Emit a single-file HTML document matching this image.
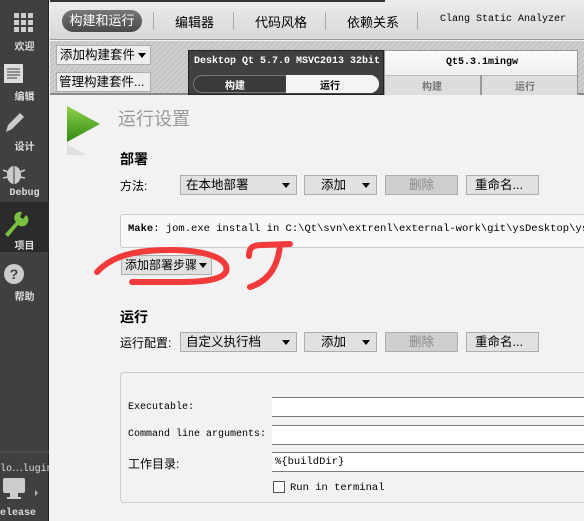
<!DOCTYPE html>
<html><head><meta charset="utf-8"><style>
*{margin:0;padding:0;box-sizing:border-box}
html,body{width:584px;height:521px;overflow:hidden}
body{background:#f2f2f2;font-family:"Liberation Sans","Noto Sans CJK SC",sans-serif;font-size:12px;color:#000;position:relative}
.a{position:absolute;white-space:nowrap}
.mono{font-family:"Liberation Mono","Noto Sans CJK SC",monospace}
.side{left:0;top:0;width:49px;height:521px;background:#404040;border-right:1px solid #222}
.sl{color:#ddd;font-size:10px;font-weight:bold;width:49px;text-align:center;left:0}
.btn{background:#e1e1e1;border:1px solid #adadad;height:20px;line-height:18px;padding-left:5px;font-size:12.5px}
.dis{background:#cfcfcf;color:#888;text-align:center;padding:0}
.arr{position:absolute;right:6px;top:7px;width:0;height:0;border-left:4px solid transparent;border-right:4px solid transparent;border-top:5px solid #000}
.inp{background:#fff;border-top:1px solid #7a7a7a;border-bottom:1px solid #7a7a7a;left:272px;width:312px;height:20px}
</style></head><body>
<div class="a side"></div>
<svg class="a" style="left:0;top:0" width="49" height="521">
<g fill="#ccc">
<rect x="14" y="13" width="5" height="5"/><rect x="21" y="13" width="5" height="5"/><rect x="28" y="13" width="5" height="5"/>
<rect x="14" y="20" width="5" height="5"/><rect x="21" y="20" width="5" height="5"/><rect x="28" y="20" width="5" height="5"/>
<rect x="14" y="27" width="5" height="5"/><rect x="21" y="27" width="5" height="5"/><rect x="28" y="27" width="5" height="5"/>
<rect x="4" y="64" width="19" height="19" fill="#ddd"/>
</g>
<g stroke="#444" stroke-width="1"><line x1="7" y1="69" x2="20" y2="69"/><line x1="7" y1="72" x2="20" y2="72"/><line x1="7" y1="75" x2="20" y2="75"/><line x1="7" y1="78" x2="17" y2="78"/></g>
<path d="M6 132 L8 125 L20 113 L24 117 L12 129 Z" fill="#ccc"/>
<ellipse cx="14" cy="175" rx="7" ry="9" fill="#ccc"/><line x1="14" y1="166" x2="14" y2="184" stroke="#404040"/>
<g stroke="#ccc" stroke-width="1.5"><line x1="3" y1="170" x2="8" y2="172"/><line x1="3" y1="178" x2="8" y2="177"/><line x1="25" y1="170" x2="20" y2="172"/><line x1="25" y1="178" x2="20" y2="177"/></g>
<rect x="0" y="202" width="49" height="50" fill="#2b2b2b"/>
<path d="M5 234 L16 222 A6 6 0 0 1 22 212 L20 217 L23 219 L26 215 A6 6 0 0 1 18 225 L8 237 Z" fill="#7ac143"/>
<circle cx="14" cy="274" r="10" fill="#ccc"/>
<text x="14" y="279" text-anchor="middle" font-size="14" font-weight="bold" fill="#404040" font-family="Liberation Sans">?</text>
<line x1="0" y1="452" x2="49" y2="452" stroke="#555"/>
<rect x="3" y="478" width="22" height="15" rx="2" fill="#ccc"/><rect x="10" y="493" width="8" height="4" fill="#ccc"/><rect x="7" y="497" width="14" height="2" fill="#ccc"/>
<path d="M35 490 L38 493 L35 496 Z" fill="#bbb"/>
</svg>
<div class="a sl" style="top:38px">欢迎</div>
<div class="a sl" style="top:88px">编辑</div>
<div class="a sl" style="top:138px">设计</div>
<div class="a sl mono" style="top:188px">Debug</div>
<div class="a sl" style="top:237px">项目</div>
<div class="a sl" style="top:288px">帮助</div>
<div class="a mono" style="left:0;top:459px;width:49px;overflow:hidden;color:#ddd;font-size:10px">lo⋯lugin</div>
<div class="a mono" style="left:0;top:508px;color:#ddd;font-size:10px;font-weight:bold">elease</div>
<div class="a" style="left:50px;top:0;width:534px;height:40px;background:linear-gradient(#ececec,#d8d8d8);border-bottom:1px solid #999"></div>
<div class="a" style="left:50px;top:0;width:335px;height:2px;background:#333"></div>
<div class="a" style="left:62px;top:10px;width:80px;height:22px;border-radius:11px;background:linear-gradient(#777,#4a4a4a);color:#fff;text-align:center;line-height:22px;font-size:13px">构建和运行</div>
<div class="a" style="left:153px;top:12px;width:1px;height:18px;background:#aaa"></div>
<div class="a" style="left:233px;top:12px;width:1px;height:18px;background:#aaa"></div>
<div class="a" style="left:325px;top:12px;width:1px;height:18px;background:#aaa"></div>
<div class="a" style="left:417px;top:12px;width:1px;height:18px;background:#aaa"></div>
<div class="a" style="left:175px;top:12px;font-size:13px">编辑器</div>
<div class="a" style="left:255px;top:12px;font-size:13px">代码风格</div>
<div class="a" style="left:347px;top:12px;font-size:13px">依赖关系</div>
<div class="a mono" style="left:440px;top:14px;font-size:10px">Clang Static Analyzer</div>
<div class="a" style="left:50px;top:41px;width:534px;height:54px;background:repeating-linear-gradient(135deg,#cfcfcf 0 2px,#c4c4c4 2px 4px);border-bottom:2px solid #888"></div>
<div class="a btn" style="left:56px;top:45px;width:95px;background:#eee;padding-left:3px">添加构建套件<span class="arr" style="right:4px"></span></div>
<div class="a btn" style="left:56px;top:72px;width:95px;background:#eee;padding-left:2px;overflow:hidden">管理构建套件...</div>
<div class="a" style="left:188px;top:50px;width:196px;height:45px;background:#404040;border:1px solid #222"></div>
<div class="a mono" style="left:194px;top:56px;color:#fff;font-size:10px;font-weight:bold">Desktop Qt 5.7.0 MSVC2013 32bit</div>
<div class="a" style="left:193px;top:75px;width:186px;height:18px;border:1px solid #777;border-radius:9px;background:#3a3a3a"></div>
<div class="a" style="left:286px;top:75px;width:93px;height:18px;border-radius:0 9px 9px 0;background:#f4f4f4"></div>
<div class="a" style="left:225px;top:77px;color:#fff;font-size:10px;font-weight:bold">构建</div>
<div class="a" style="left:320px;top:77px;font-size:10px;font-weight:bold">运行</div>
<div class="a" style="left:384px;top:50px;width:194px;height:45px;background:linear-gradient(#fafafa,#e8e8e8);border:1px solid #999"></div>
<div class="a mono" style="left:446px;top:57px;font-size:10px;font-weight:bold">Qt5.3.1mingw</div>
<div class="a" style="left:385px;top:75px;width:192px;height:20px;background:#ddd;border-top:1px solid #bbb"></div>
<div class="a" style="left:480px;top:75px;width:2px;height:20px;background:#999"></div>
<div class="a" style="left:422px;top:78px;color:#777;font-size:10px;font-weight:bold">构建</div>
<div class="a" style="left:515px;top:78px;color:#777;font-size:10px;font-weight:bold">运行</div>
<svg class="a" style="left:66px;top:105px" width="36" height="50"><defs><linearGradient id="g" x1="0" y1="0" x2="0" y2="1"><stop offset="0" stop-color="#8fd14a"/><stop offset="1" stop-color="#2f8a14"/></linearGradient></defs><path d="M1 1 L34 19 L1 37 Z" fill="url(#g)"/><path d="M1 39 L20 50 L1 50Z" fill="#e0e0e0"/></svg>
<div class="a" style="left:118px;top:105px;font-size:18px;color:#999">运行设置</div>
<div class="a" style="left:120px;top:149px;font-size:14px;font-weight:bold">部署</div>
<div class="a" style="left:120px;top:177px">方法:</div>
<div class="a btn" style="left:180px;top:175px;width:117px">在本地部署<span class="arr"></span></div>
<div class="a btn" style="left:304px;top:175px;width:73px;padding-left:16px">添加<span class="arr"></span></div>
<div class="a btn dis" style="left:385px;top:175px;width:73px">删除</div>
<div class="a btn" style="left:466px;top:175px;width:73px;padding-left:8px">重命名...</div>
<div class="a" style="left:120px;top:214px;width:464px;height:34px;background:#f8f8f8;border:1px solid #ccc;border-right:none;border-radius:3px 0 0 3px;overflow:hidden">
<div class="mono" style="position:absolute;left:7px;top:8px;font-size:10.5px;white-space:nowrap"><b>Make</b>: jom.exe install in C:\Qt\svn\extrenl\external-work\git\ysDesktop\ysqml</div></div>
<div class="a btn" style="left:121px;top:255px;width:91px;padding-left:3px;font-size:12px">添加部署步骤<span class="arr" style="right:4px"></span></div>
<div class="a" style="left:120px;top:307px;font-size:14px;font-weight:bold">运行</div>
<div class="a" style="left:120px;top:334px;font-size:12px">运行配置:</div>
<div class="a btn" style="left:180px;top:332px;width:117px">自定义执行档<span class="arr"></span></div>
<div class="a btn" style="left:304px;top:332px;width:73px;padding-left:16px">添加<span class="arr"></span></div>
<div class="a btn dis" style="left:385px;top:332px;width:73px">删除</div>
<div class="a btn" style="left:466px;top:332px;width:73px;padding-left:8px">重命名...</div>
<div class="a" style="left:120px;top:372px;width:464px;height:131px;border:1px solid #ccc;border-right:none;border-radius:4px 0 0 4px"></div>
<div class="a mono" style="left:128px;top:402px;font-size:10px">Executable:</div>
<div class="a inp" style="top:397px"></div>
<div class="a mono" style="left:128px;top:429px;font-size:10px">Command line arguments:</div>
<div class="a inp" style="top:425px"></div>
<div class="a" style="left:128px;top:455px;font-size:12px">工作目录:</div>
<div class="a inp" style="top:452px"></div>
<div class="a mono" style="left:275px;top:456px;font-size:10.5px">%{buildDir}</div>
<div class="a" style="left:273px;top:481px;width:12px;height:12px;background:#fff;border:1px solid #555"></div>
<div class="a mono" style="left:290px;top:482px;font-size:10.5px">Run in terminal</div>
<svg class="a" style="left:0;top:0" width="584" height="521"><g fill="none" stroke="#f23a3a" stroke-width="6" stroke-linecap="round" stroke-linejoin="round">
<path d="M97 272 C110 258 130 250 170 250 C200 250 222 256 226 266 C230 278 210 282 180 282 L132 282"/>
<path d="M249 256 C249 248 252 245 262 245 L290 244 M280 246 C278 262 272 280 250 287"/>
</g></svg>
</body></html>
